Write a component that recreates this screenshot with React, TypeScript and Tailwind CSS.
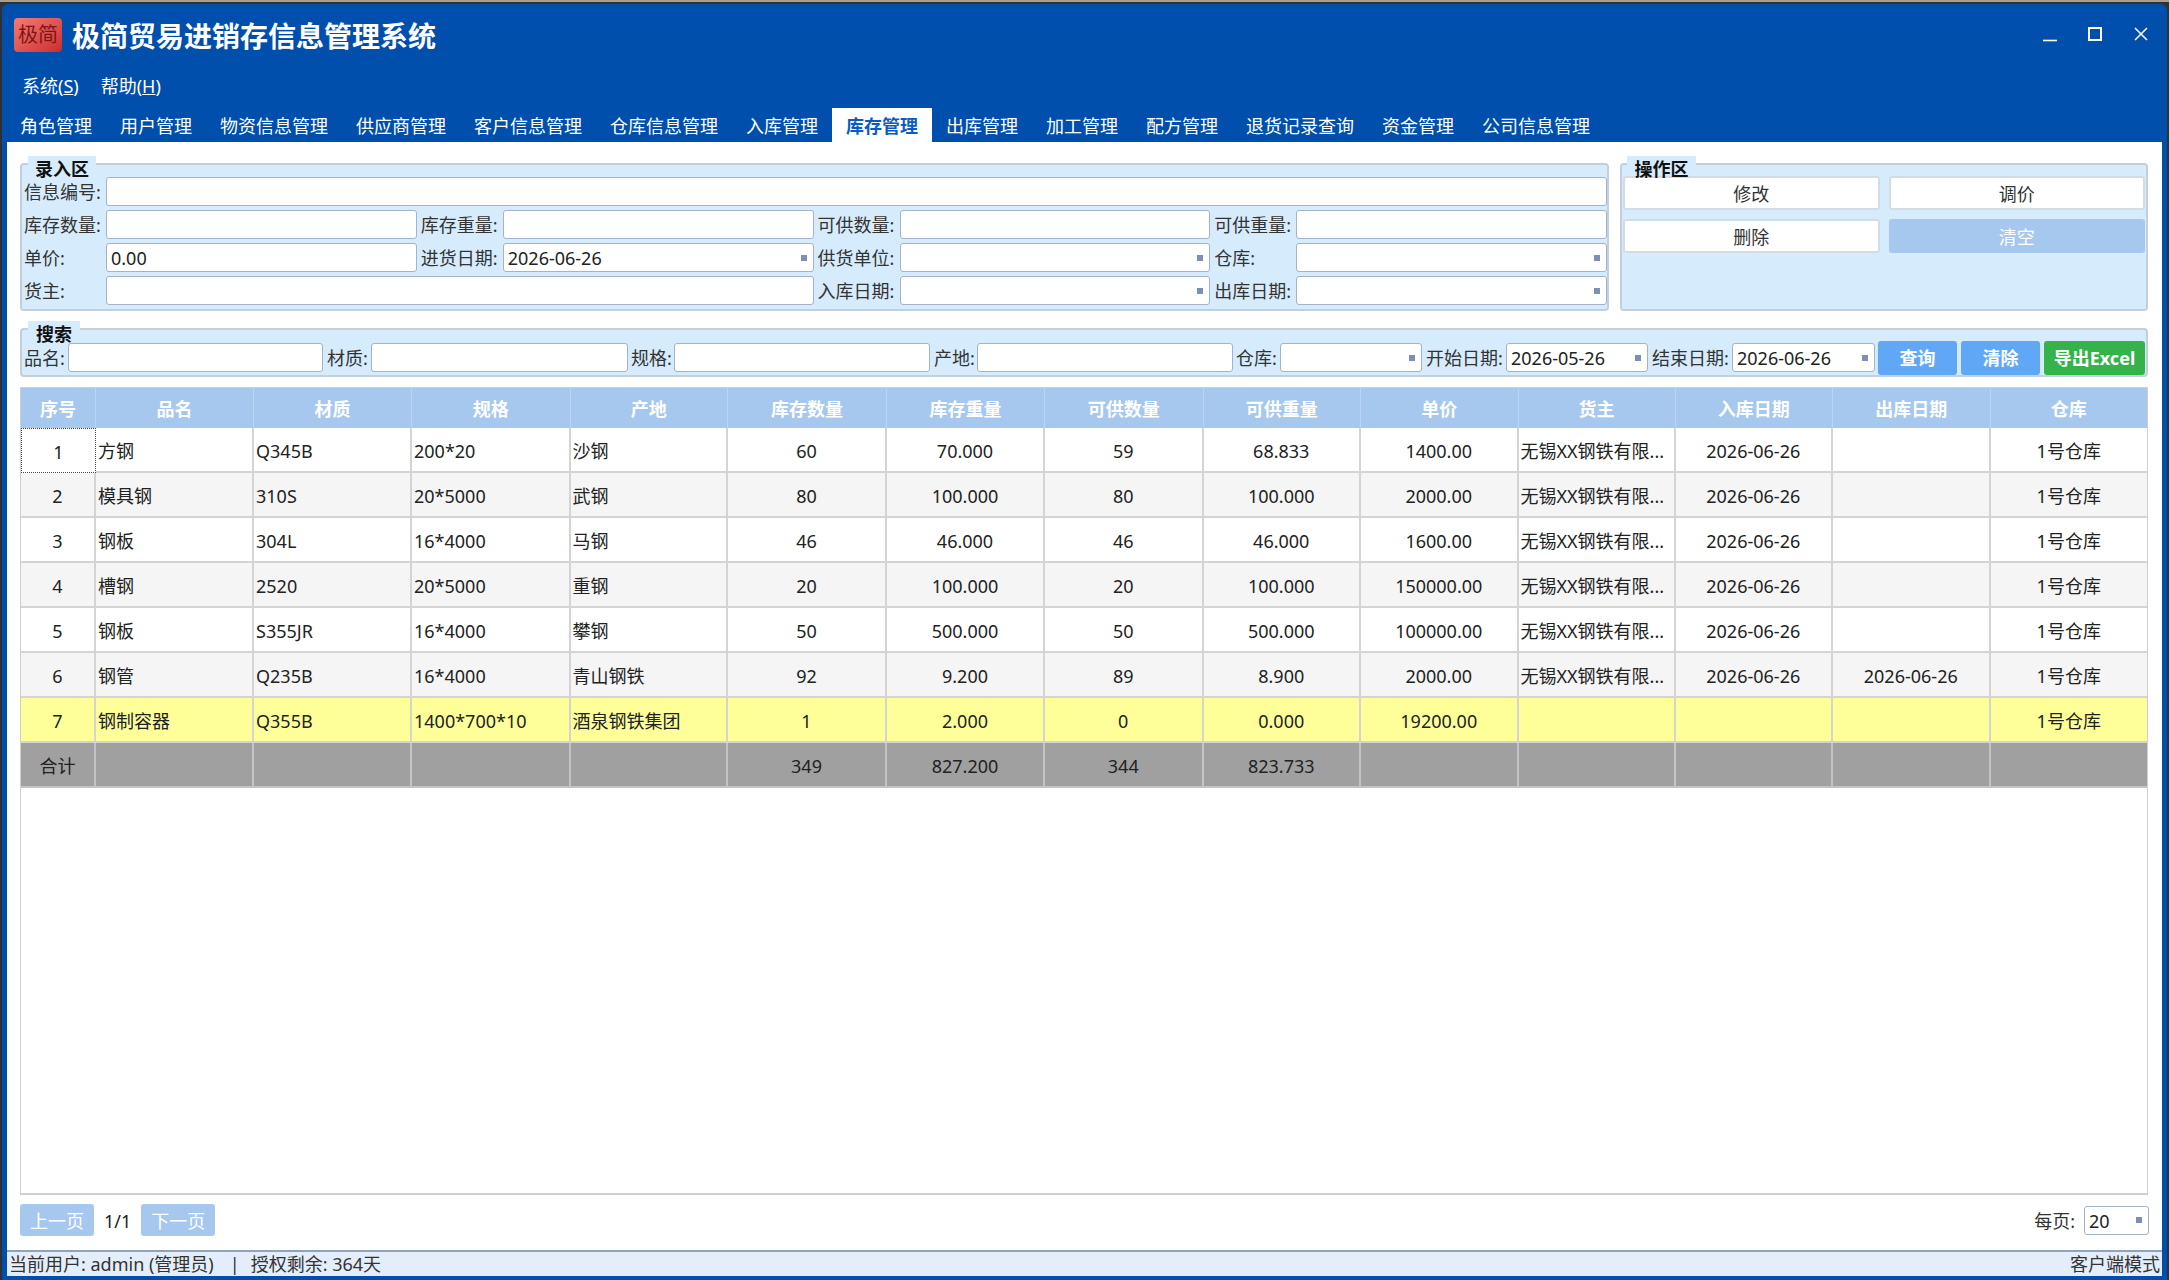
import React from 'react';

const tabs = ['角色管理', '用户管理', '物资信息管理', '供应商管理', '客户信息管理', '仓库信息管理', '入库管理', '库存管理', '出库管理', '加工管理', '配方管理', '退货记录查询', '资金管理', '公司信息管理'];
const columns = ['序号', '品名', '材质', '规格', '产地', '库存数量', '库存重量', '可供数量', '可供重量', '单价', '货主', '入库日期', '出库日期', '仓库'];
const owner = '无锡XX钢铁有限...';
const day = '2026-06-26';
const rows = [
  ['1', '方钢', 'Q345B', '200*20', '沙钢', '60', '70.000', '59', '68.833', '1400.00', owner, day, '', '1号仓库'],
  ['2', '模具钢', '310S', '20*5000', '武钢', '80', '100.000', '80', '100.000', '2000.00', owner, day, '', '1号仓库'],
  ['3', '钢板', '304L', '16*4000', '马钢', '46', '46.000', '46', '46.000', '1600.00', owner, day, '', '1号仓库'],
  ['4', '槽钢', '2520', '20*5000', '重钢', '20', '100.000', '20', '100.000', '150000.00', owner, day, '', '1号仓库'],
  ['5', '钢板', 'S355JR', '16*4000', '攀钢', '50', '500.000', '50', '500.000', '100000.00', owner, day, '', '1号仓库'],
  ['6', '钢管', 'Q235B', '16*4000', '青山钢铁', '92', '9.200', '89', '8.900', '2000.00', owner, day, day, '1号仓库'],
  ['7', '钢制容器', 'Q355B', '1400*700*10', '酒泉钢铁集团', '1', '2.000', '0', '0.000', '19200.00', '', '', '', '1号仓库'],
];
const totals = ['合计', '', '', '', '', '349', '827.200', '344', '823.733', '', '', '', '', ''];
const leftCols = [1, 2, 3, 4, 10];
const gridCols = 'grid grid-cols-[75px_158px_158px_158.5px_157.5px_159px_158px_158.5px_157.5px_157.5px_157px_157.5px_157.5px_1fr]';

function Input({ value, select, className }: { value?: string; select?: boolean; className?: string }) {
  return (
    <div className={`h-[29px] bg-white border border-[#a3b3c9] rounded-[3px] flex items-center justify-between pl-[4px] pr-[6px] text-[18px] text-[#222] ${className || ''}`}>
      <span className="pt-[2px]">{value}</span>
      {select && <span className="w-[6px] h-[6px] bg-[#7d8fb3]" />}
    </div>
  );
}

function Field({ label, value, select, span }: { label: string; value?: string; select?: boolean; span?: string }) {
  return (
    <div className={`flex items-center h-[29px] ${span || ''}`}>
      <span className="w-[82px] shrink-0 pt-[2px] text-[18px] text-[#333] whitespace-nowrap">{label}:</span>
      <Input value={value} select={select} className="flex-1 mr-[4px]" />
    </div>
  );
}

function Legend({ text, className }: { text: string; className?: string }) {
  return (
    <div className={`absolute top-[-9px] h-[20px] bg-[#d6ecfd] text-[18px] font-bold text-[#111] leading-[26px] text-center ${className || ''}`}>{text}</div>
  );
}

function SearchField({ label, width, labelWidth, value, select }: { label: string; width: string; labelWidth: string; value?: string; select?: boolean }) {
  return (
    <>
      <span className={`${labelWidth} shrink-0 pt-[2px] text-[18px] text-[#333] whitespace-nowrap`}>{label}:</span>
      <Input value={value} select={select} className={`${width} shrink-0`} />
    </>
  );
}

function Cell({ text, index, total }: { text: string; index: number; total?: boolean }) {
  const left = leftCols.includes(index);
  return (
    <div className={`flex items-center h-full pt-[3px] border-r-2 border-b-2 ${total ? 'border-[#c4c4c4]' : 'border-[#d4d4d4]'} last:border-r-0 whitespace-nowrap overflow-hidden ${left ? 'pl-[2px] justify-start' : 'justify-center'}`}>
      {text}
    </div>
  );
}

export default function App() {
  return (
    <div className="w-[2169px] h-[1280px] bg-[#2f3136] border-t-[2px] border-[#a89f8a] pt-[2px] pl-[2px] pr-[2px] overflow-hidden" style={{ fontFamily: '"Noto Sans", "Noto Sans CJK SC", sans-serif' }}>
      <div className="h-[1276px] bg-[#004fac] rounded-t-[6px] flex flex-col">
        {/* title bar */}
        <div className="h-[66px] shrink-0 flex items-start justify-between pl-[12px] pt-[13px]">
          <div className="flex items-center gap-[10px]">
            <div className="w-[48px] h-[34px] rounded-[4px] bg-gradient-to-br from-[#f47a74] to-[#cc2a2e] text-[#7e1418] text-[20px] flex items-center justify-center">极简</div>
            <span className="text-[28px] font-bold text-white leading-[34px] pt-[2px]">极简贸易进销存信息管理系统</span>
          </div>
          <div className="flex items-center text-white pt-[10px] pr-[18px]">
            <svg width="16" height="16" viewBox="0 0 16 16" className="mr-[29px]"><path d="M1 13.5h14" stroke="white" strokeWidth="1.6" /></svg>
            <svg width="16" height="16" viewBox="0 0 16 16" className="mr-[30px]"><rect x="2" y="1" width="12" height="12" fill="none" stroke="white" strokeWidth="2" /></svg>
            <svg width="16" height="16" viewBox="0 0 16 16"><path d="M2 1l12 12M14 1L2 13" stroke="white" strokeWidth="1.5" fill="none" /></svg>
          </div>
        </div>
        {/* menu */}
        <div className="h-[38px] shrink-0 flex items-center gap-[22px] pl-[20px] pb-[6px] text-[18px] text-white">
          <span>系统(<span className="underline">S</span>)</span>
          <span>帮助(<span className="underline">H</span>)</span>
        </div>
        {/* tabs */}
        <div className="h-[34px] shrink-0 flex pl-[4px] text-[18px] text-white">
          {tabs.map(t => (
            <div key={t} className={`h-full px-[14px] pt-[2px] flex items-center ${t === '库存管理' ? 'bg-white text-[#0a5cc4] font-bold' : ''}`}>{t}</div>
          ))}
        </div>
        {/* body */}
        <div className="mx-[5px] flex-1 bg-white pt-[21px] px-[13px] relative flex flex-col min-h-0 pb-[4px]">
          <div className="flex gap-[11px] pr-[1px] h-[148px] shrink-0">
            <div className="relative w-[1589px] bg-[#d6ecfd] border-2 border-[#c3cfdb] rounded-[4px] pt-[12px] pl-[2px]">
              <Legend text="录入区" className="left-[6px] w-[68px]" />
              <div className="grid grid-cols-4 gap-y-[4px] w-[1587px]">
                <Field label="信息编号" span="col-span-4" />
                <Field label="库存数量" />
                <Field label="库存重量" />
                <Field label="可供数量" />
                <Field label="可供重量" />
                <Field label="单价" value="0.00" />
                <Field label="进货日期" value="2026-06-26" select />
                <Field label="供货单位" select />
                <Field label="仓库" select />
                <Field label="货主" span="col-span-2" />
                <Field label="入库日期" select />
                <Field label="出库日期" select />
              </div>
            </div>
            <div className="relative flex-1 bg-[#d6ecfd] border-2 border-[#c3cfdb] rounded-[4px] pt-[11px] px-[1px]">
              <Legend text="操作区" className="left-[5px] w-[69px]" />
              <div className="grid grid-cols-2 gap-x-[9px] gap-y-[9px] text-[18px] text-[#333]">
                <button className="h-[34px] pt-[2px] bg-white border-2 border-[#d3dbe4] rounded-[3px]">修改</button>
                <button className="h-[34px] pt-[2px] bg-white border-2 border-[#d3dbe4] rounded-[3px]">调价</button>
                <button className="h-[34px] pt-[2px] bg-white border-2 border-[#d3dbe4] rounded-[3px]">删除</button>
                <button className="h-[34px] pt-[2px] bg-[#a7c8ee] text-white rounded-[3px]">清空</button>
              </div>
            </div>
          </div>

          <div className="relative mt-[17px] mr-[1px] h-[49px] shrink-0 bg-[#d6ecfd] border-2 border-[#c3cfdb] rounded-[4px] flex items-center pl-[2px] pt-[10px]">
            <Legend text="搜索" className="left-[6px] w-[52px]" />
            <SearchField label="品名" labelWidth="w-[44px]" width="w-[255px]" />
            <span className="w-[4px] shrink-0" />
            <SearchField label="材质" labelWidth="w-[44px]" width="w-[257px]" />
            <span className="w-[3px] shrink-0" />
            <SearchField label="规格" labelWidth="w-[43px]" width="w-[256px]" />
            <span className="w-[4px] shrink-0" />
            <SearchField label="产地" labelWidth="w-[43px]" width="w-[256px]" />
            <span className="w-[3px] shrink-0" />
            <SearchField label="仓库" labelWidth="w-[44px]" width="w-[142px]" select />
            <span className="w-[4px] shrink-0" />
            <SearchField label="开始日期" labelWidth="w-[80px]" width="w-[142px]" value="2026-05-26" select />
            <span className="w-[4px] shrink-0" />
            <SearchField label="结束日期" labelWidth="w-[80px]" width="w-[143px]" value="2026-06-26" select />
            <div className="flex gap-[4px] ml-[3px] text-[18px] font-bold text-white">
              <button className="w-[79px] h-[34px] pt-[2px] bg-[#60a8f6] rounded-[3px]">查询</button>
              <button className="w-[79px] h-[34px] pt-[2px] bg-[#60a8f6] rounded-[3px]">清除</button>
              <button className="w-[101px] h-[34px] pt-[2px] bg-[#34b34a] rounded-[3px]">导出Excel</button>
            </div>
          </div>

          {/* table */}
          <div className="mt-[10px] mr-[1px] h-[808px] shrink-0 border border-b-2 border-[#cfcfcf] text-[18px] text-[#222]">
            <div className={`${gridCols} h-[40px] bg-[#a7c8ee] text-white font-bold`}>
              {columns.map(c => (
                <div key={c} className="flex items-center justify-center pt-[2px] border-r border-[#bcd5f2] last:border-r-0">{c}</div>
              ))}
            </div>
            {rows.map((row, i) => (
              <div key={row[0]} className={`${gridCols} h-[45px] ${i === 6 ? 'bg-[#ffff99]' : i % 2 === 1 ? 'bg-[#f5f5f5]' : 'bg-white'}`}>
                {row.map((text, j) => (
                  i === 0 && j === 0
                    ? <div key={j} className="flex items-center justify-center h-full pt-[3px] border border-dotted border-[#444]">{text}</div>
                    : <Cell key={j} text={text} index={j} />
                ))}
              </div>
            ))}
            <div className={`${gridCols} h-[45px] bg-[#a0a0a0]`}>
              {totals.map((text, j) => <Cell key={j} text={text} index={j} total />)}
            </div>
          </div>

          {/* pagination */}
          <div className="mt-[9px] flex items-center justify-between h-[32px] shrink-0 text-[18px] text-[#222]">
            <div className="flex items-center">
              <button className="w-[74px] h-[32px] pt-[2px] bg-[#a7c8ee] text-white rounded-[3px]">上一页</button>
              <span className="mx-[10px] pt-[2px]">1/1</span>
              <button className="w-[74px] h-[32px] pt-[2px] bg-[#a7c8ee] text-white rounded-[3px]">下一页</button>
            </div>
            <div className="flex items-center">
              <span className="mr-[9px] pt-[2px] text-[#333]">每页:</span>
              <Input value="20" select className="w-[65px]" />
            </div>
          </div>
        </div>
        {/* status bar */}
        <div className="mx-[5px] mb-[4px] h-[26px] shrink-0 bg-[#e3eefa] border-t-2 border-[#8fa3bd] flex items-center justify-between px-[2px] text-[18px] text-[#333] whitespace-nowrap">
          <span>当前用户: admin (管理员)<span className="ml-[16px]">|</span><span className="ml-[11px]">授权剩余: 364天</span></span>
          <span>客户端模式</span>
        </div>
      </div>
    </div>
  );
}
